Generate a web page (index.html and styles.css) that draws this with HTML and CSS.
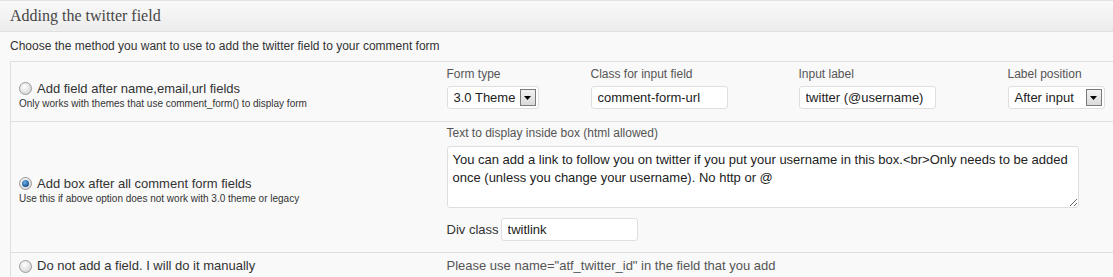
FILE: index.html
```html
<!DOCTYPE html>
<html lang="en">
<head>
    <meta charset="UTF-8">
    <title>Twitter field settings</title>
    <link rel="stylesheet" href="styles.css">
</head>
<body>
    <div class="postbox">
        <h3 class="hndle">Adding the twitter field</h3>
        <div class="inside">
            <p class="intro">Choose the method you want to use to add the twitter field to your comment form</p>

            <table class="methods">
                <tr class="row-fields">
                    <td class="method">
                        <label class="radio-line"><span class="radio"></span>Add field after name,email,url fields</label>
                        <div class="hint">Only works with themes that use comment_form() to display form</div>
                    </td>
                    <td class="options">
                        <div class="opt-grid">
                            <div class="opt">
                                <span class="opt-label">Form type</span>
                                <div class="select select-type">
                                    <span>3.0 Theme</span>
                                    <span class="arrow"><svg width="7" height="4" viewBox="0 0 7 4"><path d="M0 0h7L3.5 4z" fill="#000"/></svg></span>
                                </div>
                            </div>
                            <div class="opt">
                                <span class="opt-label">Class for input field</span>
                                <input class="field field-class" type="text" value="comment-form-url">
                            </div>
                            <div class="opt">
                                <span class="opt-label">Input label</span>
                                <input class="field field-class" type="text" value="twitter (@username)">
                            </div>
                            <div class="opt">
                                <span class="opt-label">Label position</span>
                                <div class="select select-pos">
                                    <span>After input</span>
                                    <span class="arrow"><svg width="7" height="4" viewBox="0 0 7 4"><path d="M0 0h7L3.5 4z" fill="#000"/></svg></span>
                                </div>
                            </div>
                        </div>
                    </td>
                </tr>
                <tr class="row-box">
                    <td class="method">
                        <label class="radio-line"><span class="radio checked"></span>Add box after all comment form fields</label>
                        <div class="hint">Use this if above option does not work with 3.0 theme or legacy</div>
                    </td>
                    <td class="options">
                        <span class="opt-label">Text to display inside box (html allowed)</span>
                        <textarea class="box-text">You can add a link to follow you on twitter if you put your username in this box.&lt;br&gt;Only needs to be added once (unless you change your username). No http or @</textarea>
                        <div class="div-class">
                            <span>Div class</span>
                            <input class="field field-div" type="text" value="twitlink">
                        </div>
                    </td>
                </tr>
                <tr class="row-manual">
                    <td class="method">
                        <label class="radio-line"><span class="radio"></span>Do not add a field. I will do it manually</label>
                    </td>
                    <td class="options">
                        <span class="note">Please use name="atf_twitter_id" in the field that you add</span>
                    </td>
                </tr>
            </table>
        </div>
    </div>
</body>
</html>
```

FILE: styles.css
```css
:root {
    --bg: #f9f9f9;
    --line: #dfdfdf;
    --text: #333;
    --text-light: #555;
}

* {
    box-sizing: border-box;
    margin: 0;
    padding: 0;
}

body {
    font-family: 'Liberation Sans', Arial, sans-serif;
    font-size: 13px;
    color: var(--text);
    background: var(--bg);
    overflow: hidden;
}

.hndle {
    height: 32px;
    padding: 0 10px;
    border-top: 1px solid #e3e3e3;
    border-bottom: 1px solid var(--line);
    background: linear-gradient(to bottom, #f9f9f9, #ececec);
    font-family: 'Liberation Serif', 'Times New Roman', serif;
    font-size: 16px;
    font-weight: normal;
    line-height: 30px;
    color: #464646;
}

.inside {
    padding: 0 0 0 10px;
}

.intro {
    font-size: 12px;
    line-height: 15px;
    padding: 7px 0 7px;
}

.methods {
    width: 100%;
    border-collapse: collapse;
    border-left: 1px solid var(--line);
}

.methods td {
    border-top: 1px solid var(--line);
    border-bottom: 1px solid var(--line);
    vertical-align: middle;
}

.method {
    width: 430px;
    padding: 0 8px;
}

.radio-line {
    display: flex;
    align-items: center;
    gap: 5px;
    font-size: 13px;
    line-height: 16px;
    color: var(--text);
}

.radio {
    width: 13px;
    height: 13px;
    border-radius: 50%;
    border: 1px solid #9a9a9a;
    background: radial-gradient(circle at 40% 35%, #ffffff, #d6d6d6 80%);
    flex-shrink: 0;
    position: relative;
}

.radio.checked::after {
    content: '';
    position: absolute;
    top: 2px;
    left: 2px;
    width: 7px;
    height: 7px;
    border-radius: 50%;
    background: radial-gradient(circle at 40% 35%, #6ab0e8, #16508c 75%);
}

.hint {
    font-size: 10px;
    line-height: 13px;
    color: var(--text);
}

.options {
    padding: 0 6px;
    color: var(--text-light);
}

.row-fields td {
    height: 60px;
}

.row-fields .method {
    padding-top: 7px;
}

.row-fields .options {
    vertical-align: top;
    padding-top: 5px;
}

.opt-grid {
    display: grid;
    grid-template-columns: 144px 208px 209px auto;
    align-items: start;
}

.opt {
    display: flex;
    flex-direction: column;
    align-items: flex-start;
    gap: 4px;
}

.opt-label {
    display: block;
    font-size: 12px;
    line-height: 15px;
    color: var(--text-light);
}

.field {
    height: 23px;
    padding: 0 6px;
    border: 1px solid var(--line);
    border-radius: 3px;
    background: #fff;
    font-family: inherit;
    font-size: 13px;
    color: #222;
    outline: none;
}

.field-class {
    width: 137px;
}

.select {
    display: flex;
    align-items: center;
    justify-content: space-between;
    gap: 3px;
    height: 23px;
    padding: 0 2px 0 6px;
    border: 1px solid var(--line);
    border-radius: 3px;
    background: #fff;
    color: #222;
    font-size: 13px;
    white-space: nowrap;
}

.select-type {
    width: 92px;
}

.select-pos {
    width: 97px;
}

.arrow {
    display: flex;
    align-items: center;
    justify-content: center;
    width: 16px;
    height: 17px;
    flex-shrink: 0;
    border: 1px solid #7a7a7a;
    background: linear-gradient(to bottom, #f2f2f2, #dadada);
}

.row-box td {
    height: 131px;
}

.row-box .method {
    padding-top: 6px;
}

.row-box .options {
    vertical-align: top;
    padding-top: 4px;
}

.box-text {
    display: block;
    width: 632px;
    height: 62px;
    margin-top: 5px;
    padding: 4px 5px;
    border: 1px solid var(--line);
    border-radius: 3px;
    background: #fff;
    font-family: inherit;
    font-size: 13px;
    line-height: 18px;
    color: #222;
    outline: none;
}

.div-class {
    display: flex;
    align-items: center;
    gap: 2px;
    margin-top: 10px;
    font-size: 13px;
    color: var(--text);
}

.field-div {
    width: 137px;
    height: 23px;
}

.row-manual td {
    height: 25px;
}

.row-manual .method {
    padding-top: 2px;
}

.note {
    font-size: 13px;
    color: var(--text-light);
}
```
